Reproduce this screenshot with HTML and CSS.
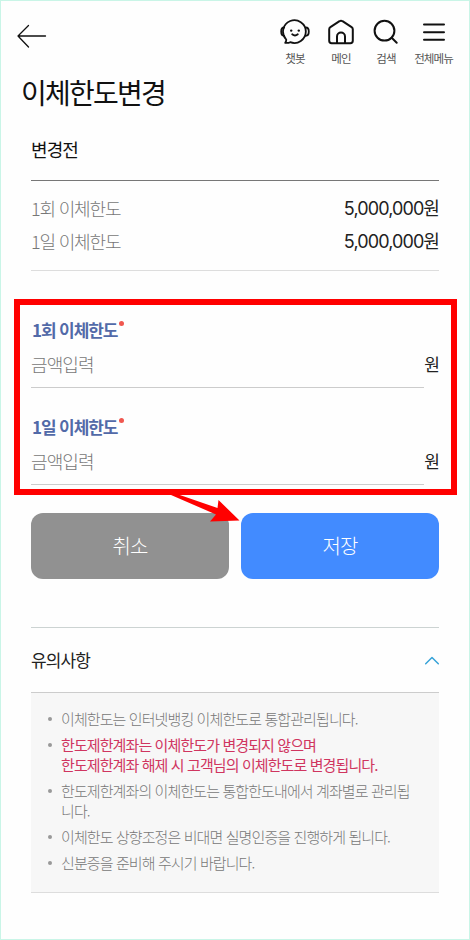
FILE: index.html
```html
<!DOCTYPE html>
<html lang="ko">
<head>
    <meta charset="UTF-8">
    <meta name="viewport" content="width=device-width, initial-scale=1.0">
    <title>이체한도변경</title>
    <link rel="stylesheet" href="styles.css">
</head>
<body>
    <div class="page">
        <header class="header">
            <a class="back" href="#" aria-label="뒤로">
                <svg width="30" height="24" viewBox="0 0 30 24"><path d="M28.500 12H1M11.500 1.500L1 12l10.500 11"/></svg>
            </a>
            <nav class="menu">
                <a class="menu-item chatbot" href="#">
                    <svg width="30" height="26" viewBox="0 0 30 26">
                        <path d="M6.200 20.500A11.400 11.400 0 1 1 10.200 23.200c-1.600.8-3.200.9-5 .6.8-1 1.200-2 1-3.300z"/>
                        <path d="M4.200 8.500C2.200 8.500 1.200 9.800 1.200 12.500s1 4.300 3 4.300M25.800 8.500c2 0 3 1.300 3 4s-1 4.300-3 4.300"/>
                        <path d="M12.200 15.300q2.800 2.400 5.600 0"/>
                        <circle class="eye" cx="11.200" cy="11.600" r="1.200"/>
                        <circle class="eye" cx="18.800" cy="11.600" r="1.200"/>
                    </svg>
                    <span>챗봇</span>
                </a>
                <a class="menu-item home" href="#">
                    <svg width="26" height="26" viewBox="0 0 26 26">
                        <path d="M1.200 10.300c0-1 .4-1.700 1.200-2.200L11.500 2.200c1-.7 2-.7 3 0l9.100 5.900c.8.5 1.200 1.200 1.200 2.200v11.500c0 1.600-.8 2.400-2.400 2.400H3.600c-1.600 0-2.400-.8-2.400-2.400z"/>
                        <path d="M9 24v-6.500a4 4 0 0 1 8 0V24"/>
                    </svg>
                    <span>메인</span>
                </a>
                <a class="menu-item search" href="#">
                    <svg width="26" height="26" viewBox="0 0 26 26"><circle cx="11.500" cy="11.700" r="9.900"/><path d="M18.700 18.800l5 5"/></svg>
                    <span>검색</span>
                </a>
                <a class="menu-item all" href="#">
                    <svg width="24" height="26" viewBox="0 0 24 26"><path d="M2 5.500h20M2 13.200h20M2 20.800h20"/></svg>
                    <span>전체메뉴</span>
                </a>
            </nav>
        </header>

        <h1>이체한도변경</h1>

        <section class="before">
            <h2>변경전</h2>
            <dl class="limits">
                <div class="limit-row">
                    <dt>1회 이체한도</dt>
                    <dd>5,000,000원</dd>
                </div>
                <div class="limit-row">
                    <dt>1일 이체한도</dt>
                    <dd>5,000,000원</dd>
                </div>
            </dl>
        </section>

        <form class="form">
            <div class="fields">
                <div class="field">
                    <label for="once">1회 이체한도</label>
                    <div class="field-row">
                        <input id="once" type="text" placeholder="금액입력">
                        <span class="unit">원</span>
                    </div>
                </div>
                <div class="field">
                    <label for="daily">1일 이체한도</label>
                    <div class="field-row">
                        <input id="daily" type="text" placeholder="금액입력">
                        <span class="unit">원</span>
                    </div>
                </div>
                <svg class="arrow" width="72" height="32" viewBox="0 0 72 32"><path d="M0 0H5L48.500 15L49.500 7L70.500 27.500L41 28.500L47 21.500L2 2Z"/></svg>
            </div>
            <div class="btn-container">
                <button class="btn cancel" type="button">취소</button>
                <button class="btn save" type="button">저장</button>
            </div>
        </form>

        <section class="notice">
            <div class="notice-header">
                <h2>유의사항</h2>
                <svg width="14" height="9" viewBox="0 0 14 9"><path d="M.7 7.800L7 1.500l6.300 6.300"/></svg>
            </div>
            <ul class="notice-list">
                <li>이체한도는 인터넷뱅킹 이체한도로 통합관리됩니다.</li>
                <li class="important"><span>한도제한계좌는 이체한도가 변경되지 않으며<br>한도제한계좌 해제 시 고객님의 이체한도로 변경됩니다.</span></li>
                <li>한도제한계좌의 이체한도는 통합한도내에서 계좌별로 관리됩니다.</li>
                <li>이체한도 상향조정은 비대면 실명인증을 진행하게 됩니다.</li>
                <li>신분증을 준비해 주시기 바랍니다.</li>
            </ul>
        </section>
    </div>
</body>
</html>
```

FILE: styles.css
```css
/* Base styles */
* {
    box-sizing: border-box;
}

body {
    margin: 0;
    font-family: "Noto Sans CJK KR", sans-serif;
    font-size: 18px;
    letter-spacing: -0.05em;
    color: #222;
    background-color: #fefefe;
}

.page {
    height: 940px;
    padding: 0 30px;
    border: 1px solid #c9f5e7;
    overflow: hidden;
}

h1, h2, dl, dd, ul {
    margin: 0;
    padding: 0;
    font-weight: 400;
}

svg {
    display: block;
    fill: none;
    stroke: #111;
    stroke-width: 2;
    stroke-linecap: round;
    stroke-linejoin: round;
}

a {
    color: inherit;
    text-decoration: none;
}

/* Header */
.header {
    display: flex;
    justify-content: space-between;
    height: 70px;
    margin: 0 -20px 0 -14px;
}

.back {
    padding-top: 23px;
}

.back svg {
    stroke-width: 1.3;
}

.menu {
    display: flex;
    padding-top: 18px;
}

.menu-item {
    display: flex;
    flex-direction: column;
    align-items: center;
    width: 46px;
    font-size: 11.5px;
    line-height: 16px;
    color: #555;
}

.menu-item span {
    margin-top: 5px;
    white-space: nowrap;
}

.menu-item .eye {
    fill: #111;
    stroke: none;
}

.chatbot svg {
    stroke-width: 1.8;
}

.search {
    width: 44px;
}

.all {
    width: 51px;
}

h1 {
    height: 46px;
    margin-left: -10px;
    font-size: 28px;
    letter-spacing: -0.062em;
    line-height: 42px;
    color: #111;
}

/* Current limits */
.before h2 {
    height: 63px;
    padding-top: 19px;
    font-size: 18px;
    line-height: 26px;
    color: #111;
}

.limits {
    padding: 11px 0 12px;
    border-top: 1px solid #777;
    border-bottom: 1px solid #ddd;
}

.limit-row {
    display: flex;
    justify-content: space-between;
    line-height: 33px;
}

.limit-row dt {
    font-weight: 300;
    letter-spacing: -0.065em;
    color: #777;
}

.limit-row dd {
    font-family: Inter, "Noto Sans CJK KR", sans-serif;
}

/* New limits */
.fields {
    position: relative;
    height: 196px;
    margin: 28px -18px 0 -17px;
    padding: 12px 12px 0 11px;
    border: 6px solid #f00;
}

.field {
    height: 97px;
}

.field label {
    display: block;
    padding-left: 1px;
    font-size: 17px;
    font-weight: 700;
    letter-spacing: -0.065em;
    line-height: 26px;
    color: #526aa8;
}

.field label::after {
    content: "";
    display: inline-block;
    width: 5px;
    height: 5px;
    margin-left: 2px;
    border-radius: 50%;
    background-color: #f0574f;
    vertical-align: 11px;
}

.field-row {
    display: flex;
    line-height: 42px;
}

.field input {
    flex: 1;
    min-width: 0;
    height: 45px;
    padding: 0 0 3px;
    border: 0;
    border-bottom: 1px solid #ccc;
    background: none;
    font: inherit;
    font-weight: 300;
    letter-spacing: inherit;
}

.field input::placeholder {
    color: #777;
}

.unit {
    font-size: 17px;
}

.arrow {
    position: absolute;
    left: 149px;
    top: 188px;
    fill: #f00;
    stroke: none;
}

.btn-container {
    display: flex;
    gap: 12px;
    margin-top: 18px;
}

.btn {
    flex: 1;
    height: 66px;
    padding-bottom: 3px;
    border: none;
    border-radius: 12px;
    font: inherit;
    font-size: 20px;
    font-weight: 300;
    letter-spacing: inherit;
    color: #fff;
}

.cancel {
    background-color: #919191;
}

.save {
    background-color: #428bff;
}

/* Notice */
.notice {
    margin-top: 48px;
    border-top: 1px solid #ccd3d2;
}

.notice-header {
    display: flex;
    justify-content: space-between;
    align-items: center;
    height: 64px;
}

.notice-header h2 {
    padding-bottom: 2px;
    font-size: 17px;
}

.notice-header svg {
    stroke: #37a3d8;
    stroke-width: 1.5;
}

.notice-list {
    height: 201px;
    padding: 16px 24px 0 17px;
    border-top: 1px solid #ccc;
    border-bottom: 1px solid #ddd;
    background-color: #f7f7f7;
    list-style: none;
    font-size: 15px;
    font-weight: 300;
    line-height: 19.5px;
    color: #777;
}

.notice-list li {
    position: relative;
    margin-bottom: 6.8px;
    padding-left: 13px;
    word-break: break-all;
}

.notice-list li::before {
    content: "";
    position: absolute;
    left: 0;
    top: 8px;
    width: 4px;
    height: 4px;
    border-radius: 50%;
    background-color: #999;
}

.notice-list .important span {
    font-weight: 400;
    color: #d0355f;
}
```
